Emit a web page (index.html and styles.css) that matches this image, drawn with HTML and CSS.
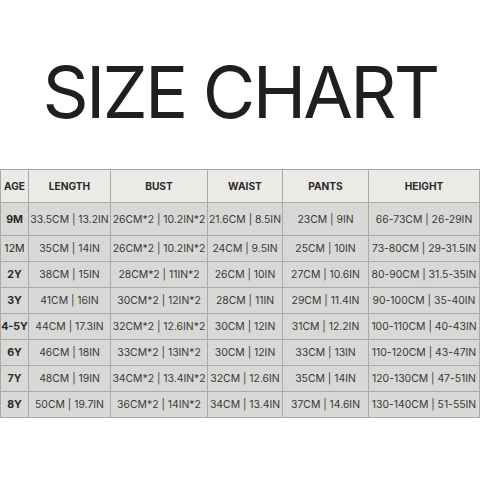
FILE: index.html
```html
<!DOCTYPE html>
<html>
<head>
<meta charset="utf-8">
<link rel="stylesheet" href="styles.css">
</head>
<body>
<div class="page">
  <h1 class="title">SIZE CHART</h1>
  <table class="chart">
    <colgroup>
      <col class="c-age"><col class="c-len"><col class="c-bust"><col class="c-waist"><col class="c-pants"><col class="c-height">
    </colgroup>
    <thead>
      <tr><th>AGE</th><th>LENGTH</th><th>BUST</th><th>WAIST</th><th>PANTS</th><th>HEIGHT</th></tr>
    </thead>
    <tbody>
      <tr class="tall"><th>9M</th><td>33.5CM | 13.2IN</td><td>26CM*2 | 10.2IN*2</td><td>21.6CM | 8.5IN</td><td>23CM | 9IN</td><td>66-73CM | 26-29IN</td></tr>
      <tr><th class="light">12M</th><td>35CM | 14IN</td><td>26CM*2 | 10.2IN*2</td><td>24CM | 9.5IN</td><td>25CM | 10IN</td><td>73-80CM | 29-31.5IN</td></tr>
      <tr><th>2Y</th><td>38CM | 15IN</td><td>28CM*2 | 11IN*2</td><td>26CM | 10IN</td><td>27CM | 10.6IN</td><td>80-90CM | 31.5-35IN</td></tr>
      <tr><th>3Y</th><td>41CM | 16IN</td><td>30CM*2 | 12IN*2</td><td>28CM | 11IN</td><td>29CM | 11.4IN</td><td>90-100CM | 35-40IN</td></tr>
      <tr><th>4-5Y</th><td>44CM | 17.3IN</td><td>32CM*2 | 12.6IN*2</td><td>30CM | 12IN</td><td>31CM | 12.2IN</td><td>100-110CM | 40-43IN</td></tr>
      <tr><th>6Y</th><td>46CM | 18IN</td><td>33CM*2 | 13IN*2</td><td>30CM | 12IN</td><td>33CM | 13IN</td><td>110-120CM | 43-47IN</td></tr>
      <tr><th>7Y</th><td>48CM | 19IN</td><td>34CM*2 | 13.4IN*2</td><td>32CM | 12.6IN</td><td>35CM | 14IN</td><td>120-130CM | 47-51IN</td></tr>
      <tr><th>8Y</th><td>50CM | 19.7IN</td><td>36CM*2 | 14IN*2</td><td>34CM | 13.4IN</td><td>37CM | 14.6IN</td><td>130-140CM | 51-55IN</td></tr>
    </tbody>
  </table>
</div>
</body>
</html>
```
FILE: styles.css
```css
html, body {
  margin: 0;
  padding: 0;
  background: #ffffff;
}
.page {
  width: 480px;
  height: 480px;
  font-family: Inter, "Liberation Sans", sans-serif;
  color: #222222;
}
.title {
  margin: 0;
  height: 169px;
  box-sizing: border-box;
  padding-top: 50px;
  font-size: 72px;
  font-weight: 400;
  line-height: 84px;
  text-align: center;
  color: #1f1f1f;
  letter-spacing: -2.8px;
}
.chart {
  border-collapse: collapse;
  table-layout: fixed;
  width: 479px;
  font-size: 10.4px;
  color: #383838;
}
.c-age { width: 28px; }
.c-len { width: 82px; }
.c-bust { width: 97px; }
.c-waist { width: 75px; }
.c-pants { width: 86px; }
.c-height { width: 111px; }
.chart th, .chart td {
  border: 1px solid #a9a9a9;
  padding: 0;
  text-align: center;
  white-space: nowrap;
  overflow: visible;
}
.chart thead th {
  background: #ebeae7;
  height: 32px;
  font-weight: 700;
  font-size: 10.2px;
  color: #2a2a2a;
}
.chart tbody tr {
  height: 26px;
  background: #d8d8d7;
}
.chart tbody tr.tall {
  height: 33px;
}
.chart tbody th {
  font-weight: 700;
  font-size: 10.6px;
  color: #2a2a2a;
}
.chart tbody th.light {
  font-weight: 400;
}
```
